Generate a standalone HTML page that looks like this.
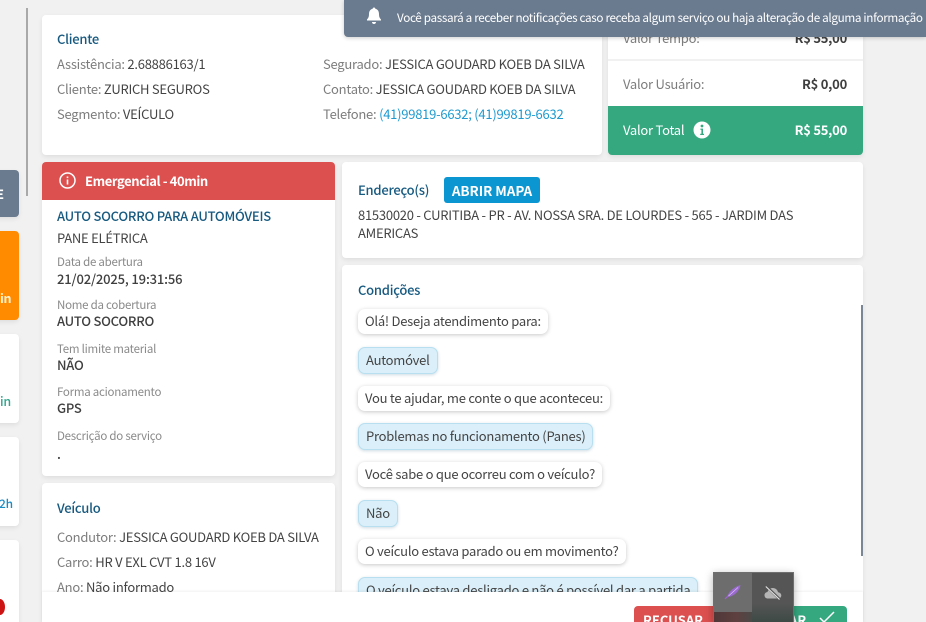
<!DOCTYPE html>
<html lang="pt-BR"><head><meta charset="utf-8">
<style>
html,body{margin:0;padding:0;width:926px;height:622px;overflow:hidden;background:#f1f1f1}
body{position:relative;font-family:"Noto Sans CJK JP","Liberation Sans",sans-serif;font-size:13px;letter-spacing:-.25px;color:#444}
div,span.a{box-sizing:border-box}
.c{position:absolute;background:#fff;border-radius:4px;box-shadow:0 2px 5px rgba(0,0,0,.08)}
.t{position:absolute;white-space:nowrap;line-height:18px;height:18px;color:#444}
.g{color:#7d7d7d}
.h{color:#175a80;font-weight:500}
.l{font-size:11.5px;color:#8a8a8a}
.b{font-weight:500;color:#3f3f3f}
.q,.r{position:absolute;left:358px;height:25px;border-radius:7px;line-height:24px;white-space:nowrap;padding:0 7px;background:#fff;box-shadow:0 1px 4px rgba(0,0,0,.22);color:#444}
.r{background:#daeff9;border:1px solid #b8dff0;padding:0 7px;height:27px;line-height:24px;box-shadow:0 1px 3px rgba(0,80,120,.2)}
</style></head><body>

<!-- left rail -->
<div style="position:absolute;left:26px;top:8px;width:2px;height:188px;background:#a9a9a9"></div>
<div class="c" style="left:-20px;top:170px;width:39px;height:47px;background:#6b7b8f"></div>
<div class="t" style="left:-4px;top:185px;color:#fff;font-weight:700">E</div>
<div class="c" style="left:-20px;top:231px;width:39px;height:89px;background:#ff8c00"></div>
<div class="t" style="left:0;top:289px;color:#fff3d0;font-weight:700;font-size:12.5px">in</div>
<div class="c" style="left:-20px;top:334px;width:39px;height:89px"></div>
<div class="t" style="left:0;top:392px;color:#2fa58c;font-weight:500;font-size:12.5px">in</div>
<div class="c" style="left:-20px;top:437px;width:39px;height:89px"></div>
<div class="t" style="left:-1px;top:495px;color:#1a8cc4;font-weight:500;font-size:12px">2h</div>
<div class="c" style="left:-20px;top:540px;width:39px;height:100px"></div>
<div style="position:absolute;left:-5px;top:599px;width:10px;height:16px;border-radius:50%;background:#cc1414"></div>

<!-- Cliente -->
<div class="c" style="left:42px;top:15px;width:560px;height:140px"></div>
<div class="t h" style="left:57px;top:30px">Cliente</div>
<div class="t" style="left:57px;top:55px"><span class="g">Assistência:</span> 2.68886163/1</div>
<div class="t" style="left:57px;top:80px"><span class="g">Cliente:</span> ZURICH SEGUROS</div>
<div class="t" style="left:57px;top:105px"><span class="g">Segmento:</span> VEÍCULO</div>
<div class="t" style="left:323px;top:55px"><span class="g">Segurado:</span> JESSICA GOUDARD KOEB DA SILVA</div>
<div class="t" style="left:323px;top:80px"><span class="g">Contato:</span> JESSICA GOUDARD KOEB DA SILVA</div>
<div class="t" style="left:323px;top:105px"><span class="g">Telefone:</span> <span style="color:#1f9ad0">(41)99819-6632; (41)99819-6632</span></div>

<!-- valores -->
<div class="c" style="left:608px;top:10px;width:255px;height:145px"></div>
<div class="t g" style="left:623px;top:29px">Valor Tempo:</div>
<div class="t b" style="right:79px;top:29px;font-weight:700">R$ 55,00</div>
<div style="position:absolute;left:608px;top:59px;width:255px;height:2px;background:#f1f1f1"></div>
<div class="t g" style="left:623px;top:75px">Valor Usuário:</div>
<div class="t b" style="right:79px;top:75px;font-weight:700">R$ 0,00</div>
<div style="position:absolute;left:608px;top:106px;width:255px;height:49px;background:#35a880;border-radius:0 0 4px 4px"></div>
<div class="t" style="left:623px;top:121px;color:#fff">Valor Total</div>
<svg style="position:absolute;left:693px;top:121px" width="18" height="18" viewBox="0 0 18 18"><circle cx="9" cy="9" r="8.5" fill="#fff"/><circle cx="9" cy="5" r="1.4" fill="#35a880"/><path d="M7.4 7.6h2.6v5.2h1v1.2H7.2v-1.2h1.2V8.8h-1z" fill="#35a880"/></svg>
<div class="t" style="right:79px;top:121px;color:#fff;font-weight:700">R$ 55,00</div>

<!-- toast -->
<div style="position:absolute;left:344px;top:0;width:582px;height:37px;background:#6b7b8f;border-radius:0 0 0 4px;box-shadow:0 1px 4px rgba(0,0,0,.2)"></div>
<svg style="position:absolute;left:364px;top:6px" width="20" height="20" viewBox="0 0 20 20"><path d="M10 1.5c.8 0 1.3.5 1.3 1.2 2.6.6 3.7 2.7 3.7 5.3 0 3 .8 4.200 2 5.500v1H3v-1c1.200-1.300 2-2.500 2-5.500 0-2.600 1.100-4.700 3.700-5.300 0-.7.500-1.200 1.300-1.200zM8 16h4c0 1.200-.9 2-2 2s-2-.8-2-2z" fill="#fff"/></svg>
<div class="t" style="left:397px;top:9px;color:#fff;font-size:11.7px;letter-spacing:-.33px">Você passará a receber notificações caso receba algum serviço ou haja alteração de alguma informação</div>

<!-- Emergencial -->
<div class="c" style="left:42px;top:162px;width:293px;height:314px"></div>
<div style="position:absolute;left:42px;top:162px;width:293px;height:38px;background:#dc5050;border-radius:4px 4px 0 0"></div>
<svg style="position:absolute;left:59px;top:172px" width="17" height="17" viewBox="0 0 17 17"><circle cx="8.500" cy="8.500" r="7.500" fill="none" stroke="#fff" stroke-width="1.500"/><rect x="7.700" y="7.500" width="1.600" height="5" fill="#fff"/><rect x="7.700" y="4.500" width="1.600" height="1.600" fill="#fff"/></svg>
<div class="t" style="left:85px;top:172px;color:#fff;font-weight:700;letter-spacing:-.4px">Emergencial - 40min</div>
<div class="t h" style="left:57px;top:207px">AUTO SOCORRO PARA AUTOMÓVEIS</div>
<div class="t" style="left:57px;top:229px">PANE ELÉTRICA</div>
<div class="t l" style="left:57px;top:253px">Data de abertura</div>
<div class="t b" style="left:57px;top:270px;letter-spacing:-.15px">21/02/2025, 19:31:56</div>
<div class="t l" style="left:57px;top:296px">Nome da cobertura</div>
<div class="t b" style="left:57px;top:312px">AUTO SOCORRO</div>
<div class="t l" style="left:57px;top:340px">Tem limite material</div>
<div class="t b" style="left:57px;top:356px">NÃO</div>
<div class="t l" style="left:57px;top:383px">Forma acionamento</div>
<div class="t b" style="left:57px;top:399px">GPS</div>
<div class="t l" style="left:57px;top:427px">Descrição do serviço</div>
<div class="t b" style="left:57px;top:445px">.</div>

<!-- Veiculo -->
<div class="c" style="left:42px;top:483px;width:293px;height:160px"></div>
<div class="t h" style="left:57px;top:499px">Veículo</div>
<div class="t" style="left:57px;top:528px"><span class="g">Condutor:</span> JESSICA GOUDARD KOEB DA SILVA</div>
<div class="t" style="left:57px;top:553px"><span class="g">Carro:</span> HR V EXL CVT 1.8 16V</div>
<div class="t" style="left:57px;top:578px"><span class="g">Ano:</span> Não informado</div>

<!-- Endereco -->
<div class="c" style="left:342px;top:162px;width:521px;height:96px"></div>
<div class="t h" style="left:358px;top:181px">Endereço(s)</div>
<div style="position:absolute;left:444px;top:177px;width:96px;height:26px;background:#0b96d2;border-radius:3px;color:#fff;font-size:13.5px;font-weight:700;text-align:center;line-height:26px;letter-spacing:-.05px">ABRIR MAPA</div>
<div class="t" style="left:358px;top:206px">81530020 - CURITIBA - PR - AV. NOSSA SRA. DE LOURDES - 565 - JARDIM DAS</div>
<div class="t" style="left:358px;top:224px">AMERICAS</div>

<!-- Condicoes -->
<div class="c" style="left:342px;top:265px;width:521px;height:370px"></div>
<div class="t h" style="left:358px;top:281px">Condições</div>
<div class="q" style="top:309px">Olá! Deseja atendimento para:</div>
<div class="r" style="top:347px">Automóvel</div>
<div class="q" style="top:386px">Vou te ajudar, me conte o que aconteceu:</div>
<div class="r" style="top:423px">Problemas no funcionamento (Panes)</div>
<div class="q" style="top:462px">Você sabe o que ocorreu com o veículo?</div>
<div class="r" style="top:500px">Não</div>
<div class="q" style="top:539px">O veículo estava parado ou em movimento?</div>
<div class="r" style="top:577px">O veículo estava desligado e não é possível dar a partida</div>
<div style="position:absolute;left:861px;top:305px;width:2px;height:251px;background:#7a8694"></div>

<!-- bottom bar -->
<div style="position:absolute;left:42px;top:592px;width:821px;height:30px;background:#fff;box-shadow:0 -1px 2px rgba(0,0,0,.06)"></div>
<div style="position:absolute;left:634px;top:606px;width:90px;height:16px;overflow:hidden;background:#dc5050;border-radius:4px 0 0 0;color:#fff;font-weight:700;line-height:27px;padding-left:9px;letter-spacing:0">RECUSAR</div>
<div style="position:absolute;left:780px;top:606px;width:67px;height:16px;overflow:hidden;background:#35a880;border-radius:0 4px 0 0;color:#fff;font-weight:700;line-height:27px;padding-left:9px;letter-spacing:0">AR</div>
<svg style="position:absolute;left:818px;top:611px" width="18" height="11" viewBox="0 0 18 11"><path d="M2 7l4 4L16 1" fill="none" stroke="#fff" stroke-width="1.500"/></svg>

<!-- popup -->
<div style="position:absolute;left:713px;top:572px;width:81px;height:50px;background:linear-gradient(to bottom,#555 0,#555 62%,#3d4a45 100%);border:1px solid #6f6f6f;border-bottom:0;box-shadow:0 2px 8px rgba(0,0,0,.3)"></div>
<div style="position:absolute;left:714px;top:573px;width:38px;height:39px;background:#6d6d6d"></div>
<div style="position:absolute;left:714px;top:612px;width:38px;height:10px;background:linear-gradient(to right,#503838,#5e4040 60%,#4a4a48)"></div>
<svg style="position:absolute;left:724px;top:584px" width="18" height="17" viewBox="0 0 18 17"><path d="M1 15L6 10" stroke="#a060d8" stroke-width="1.200" fill="none"/><path d="M3 13C5 7 10 3 16.500 1 15.500 7 10.500 12 4 13z" fill="#9a6ad0"/><path d="M4.500 12L14 3.500" stroke="#d8c0f0" stroke-width=".8"/></svg>
<svg style="position:absolute;left:764px;top:586px" width="18" height="14" viewBox="0 0 18 14"><path d="M4 12.500C1.800 12.500 .5 11 .5 9.200 .5 7.400 1.800 6.200 3.500 6 4.200 3.500 6.200 2 8.800 2c2.800 0 4.700 1.800 5.200 4.200 1.900.2 3.300 1.400 3.300 3.200 0 1.800-1.300 3.100-3.200 3.100z" fill="#b5b5b5"/><path d="M2.500 .5L16 13.500" stroke="#555" stroke-width="2.600"/><path d="M1.800 .5L15.500 13.500" stroke="#e6e6e6" stroke-width="1.100"/></svg>

</body></html>
